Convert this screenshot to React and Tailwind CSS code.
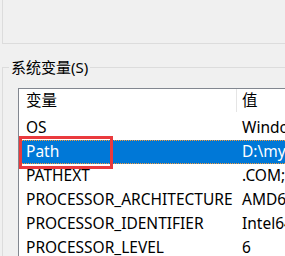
const rows = [
  { name: "OS", value: "Windows_NT" },
  { name: "Path", value: "D:\\mysql\\bin;C:\\Windows", selected: true },
  { name: "PATHEXT", value: ".COM;.EXE;.BAT" },
  { name: "PROCESSOR_ARCHITECTURE", value: "AMD64" },
  { name: "PROCESSOR_IDENTIFIER", value: "Intel64 Family 6" },
  { name: "PROCESSOR_LEVEL", value: "6" },
];

export default function App() {
  return (
    <div
      className="h-[256px] w-[285px] overflow-hidden bg-[#f0f0f0] text-black"
      style={{ fontFamily: '"Noto Sans", "Noto Sans CJK SC", sans-serif' }}
    >
      {/* user variables group, cut off at the top */}
      <div className="ml-[2px] mr-[-20px] h-[44px] border border-t-0 border-[#dcdcdc]" />

      <fieldset className="ml-[2px] mr-[-20px] mt-[14px] border border-[#dcdcdc]">
        <legend className="ml-[6px] px-[2px] text-[15px] leading-[18px]">系统变量(S)</legend>
        <div className="pl-[15px] pt-[12px]">
          <div className="relative overflow-hidden border border-[#828790] bg-white text-[15.5px]">
            <div className="flex h-[27px] pb-[4px]">
              <div className="flex w-[218px] shrink-0 items-center border-r border-[#e5e5e5] pl-[7px]">变量</div>
              <div className="flex items-center pl-[5px]">值</div>
            </div>
            {rows.map((r) => (
              <div
                key={r.name}
                className={
                  r.selected
                    ? "flex h-[24px] items-center whitespace-nowrap border border-dotted border-[#f39a3c] bg-[#0078d7] text-white"
                    : "flex h-[24px] items-center whitespace-nowrap"
                }
              >
                <div className={r.selected ? "w-[217px] shrink-0 pl-[6px]" : "w-[218px] shrink-0 pl-[7px]"}>{r.name}</div>
                <div className="min-w-0 overflow-hidden pl-[5px]">{r.value}</div>
              </div>
            ))}
            <div className="absolute left-0 top-[47px] h-[33px] w-[94px] border-[3px] border-[#ea3a3d]" />
          </div>
        </div>
      </fieldset>
    </div>
  );
}
